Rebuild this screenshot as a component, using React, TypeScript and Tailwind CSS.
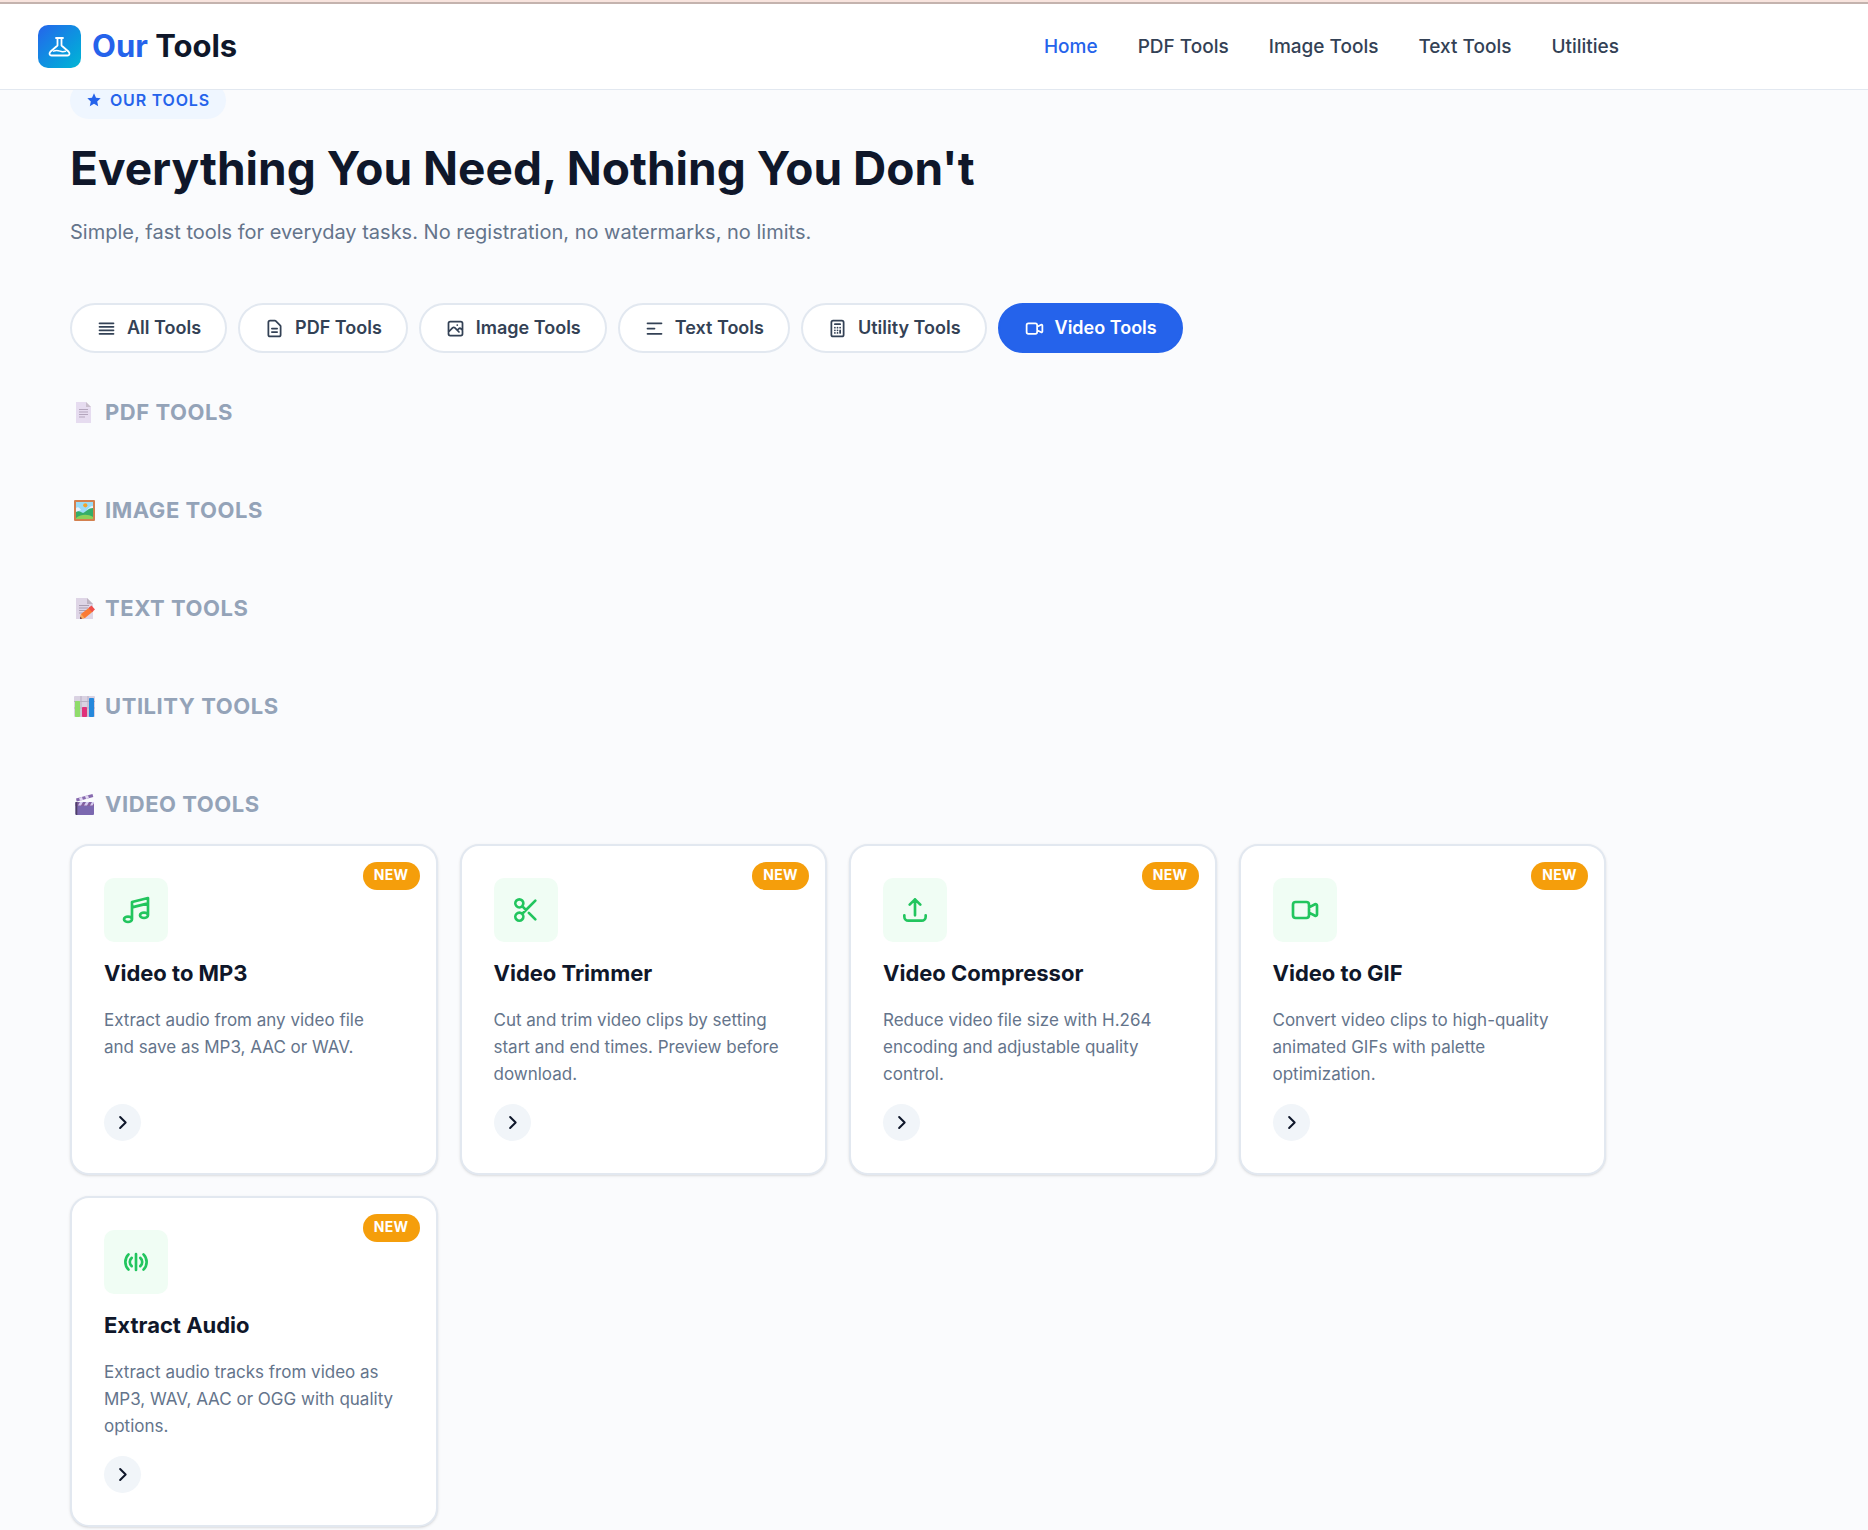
import React from "react";

function Stroke({ d, className }: { d: string; className: string }) {
  return (
    <svg viewBox="0 0 24 24" fill="none" stroke="currentColor" strokeWidth={2} strokeLinecap="round" strokeLinejoin="round" aria-hidden="true" className={className}>
      <path d={d} />
    </svg>
  );
}

const videoPath =
  "M15 10l4.553-2.276A1 1 0 0121 8.618v6.764a1 1 0 01-1.447.894L15 14M5 18h8a2 2 0 002-2V8a2 2 0 00-2-2H5a2 2 0 00-2 2v8a2 2 0 002 2z";

const navLinks = ["Home", "PDF Tools", "Image Tools", "Text Tools", "Utilities"];

const filters = [
  { label: "All Tools", d: "M4 6h16M4 10h16M4 14h16M4 18h16" },
  {
    label: "PDF Tools",
    d: "M9 12h6m-6 4h6m2 5H7a2 2 0 01-2-2V5a2 2 0 012-2h5.586a1 1 0 01.707.293l5.414 5.414a1 1 0 01.293.707V19a2 2 0 01-2 2z",
  },
  {
    label: "Image Tools",
    d: "M4 16l4.586-4.586a2 2 0 012.828 0L16 16m-2-2l1.586-1.586a2 2 0 012.828 0L20 14m-6-6h.01M6 20h12a2 2 0 002-2V6a2 2 0 00-2-2H6a2 2 0 00-2 2v12a2 2 0 002 2z",
  },
  { label: "Text Tools", d: "M4 6h16M4 12h8m-8 6h16" },
  {
    label: "Utility Tools",
    d: "M9 7h6m0 10v-3m-3 3h.01M9 17h.01M9 14h.01M12 14h.01M15 11h.01M12 11h.01M9 11h.01M7 21h10a2 2 0 002-2V5a2 2 0 00-2-2H7a2 2 0 00-2 2v14a2 2 0 002 2z",
  },
  { label: "Video Tools", d: videoPath, active: true },
];

const tools = [
  {
    title: "Video to MP3",
    text: "Extract audio from any video file and save as MP3, AAC or WAV.",
    d: "M9 19V6l12-3v13M9 19c0 1.105-1.343 2-3 2s-3-.895-3-2 1.343-2 3-2 3 .895 3 2zm12-3c0 1.105-1.343 2-3 2s-3-.895-3-2 1.343-2 3-2 3 .895 3 2zM9 10l12-3",
  },
  {
    title: "Video Trimmer",
    text: "Cut and trim video clips by setting start and end times. Preview before download.",
    d: "M14.121 14.121L19 19m-7-7l7-7m-7 7l-2.879 2.879M12 12L9.121 9.121m0 5.758a3 3 0 10-4.243 4.243 3 3 0 004.243-4.243zm0-5.758a3 3 0 10-4.243-4.243 3 3 0 004.243 4.243z",
  },
  {
    title: "Video Compressor",
    text: "Reduce video file size with H.264 encoding and adjustable quality control.",
    d: "M4 16v1a3 3 0 003 3h10a3 3 0 003-3v-1m-4-8l-4-4m0 0L8 8m4-4v12",
  },
  {
    title: "Video to GIF",
    text: "Convert video clips to high-quality animated GIFs with palette optimization.",
    d: videoPath,
  },
  {
    title: "Extract Audio",
    text: "Extract audio tracks from video as MP3, WAV, AAC or OGG with quality options.",
    d: "M12 6v12M6.4 6.3a8 8 0 000 11.4M17.6 6.3a8 8 0 010 11.4M8.8 8.9a4 4 0 000 6.2M15.2 8.9a4 4 0 010 6.2",
  },
];

function PageEmoji() {
  return (
    <svg viewBox="0 0 21 21" className="size-[21px]" aria-hidden="true">
      <path d="M2 0h10l5 5v16H2z" fill="#e6dcf0" />
      <path d="M12 0l5 5h-5z" fill="#c9bfcd" />
      <path d="M5 7.5h9M5 10h9M5 12.5h9M5 15h6" stroke="#b3a5bd" strokeWidth="1" />
    </svg>
  );
}

function PictureEmoji() {
  return (
    <svg viewBox="0 0 21 21" className="size-[21px]" aria-hidden="true">
      <rect width="21" height="21" rx="1" fill="#d3804f" />
      <rect x="2" y="2" width="17" height="17" fill="#9bdcf7" />
      <path d="M2 8c2-2 4 0 5 2l-5 2zM19 6c-3 0-4 2-6 4l6 1z" fill="#e9f2fd" />
      <circle cx="11.3" cy="5.3" r="2.1" fill="#f2a42c" />
      <path d="M2 12c3-2 5 0 7 1 3-1 5-5 10-5v11H2z" fill="#34ad68" />
      <path d="M2 18c5-4 12-4 17-1v2H2z" fill="#8bd15a" />
    </svg>
  );
}

function MemoEmoji() {
  return (
    <svg viewBox="0 0 21 21" className="size-[21px]" aria-hidden="true">
      <path d="M2 0h11l6 6v15H2z" fill="#ded5e6" />
      <path d="M13 0l6 6h-6z" fill="#bdb3c2" />
      <path d="M5 7.5h10M5 10h9M5 12.5h7M5 15h5" stroke="#aa9fb3" strokeWidth="1" />
      <path d="M6 21l1-5 9-7 3.500 4-8.500 7z" fill="#fb7a35" />
      <path d="M6 21l1-5 3.500 4z" fill="#f7ab5d" />
      <path d="M14.500 10l3-2.500 3.500 4-3 2.500z" fill="#ef4f4c" />
      <path d="M6 21l.5-2.200 1.500 1.600z" fill="#4b2a4a" />
    </svg>
  );
}

function ChartEmoji() {
  return (
    <svg viewBox="0 0 21 21" className="size-[21px]" aria-hidden="true">
      <rect width="21" height="21" rx="1" fill="#d9d2e2" />
      <path d="M0 5.500h21M0 12h21M7 0v21M14 0v21" stroke="#b9afc4" strokeWidth="1" />
      <rect x="1" y="5" width="5" height="16" rx=".8" fill="#8fdc6b" />
      <rect x="8" y="11" width="5" height="10" rx=".8" fill="#e0307a" />
      <rect x="15" y="2" width="5" height="19" rx=".8" fill="#2588dc" />
    </svg>
  );
}

function ClapperEmoji() {
  return (
    <svg viewBox="0 0 21 21" className="size-[21px]" aria-hidden="true">
      <path d="M2 4.500L18.500 0l.8 3L2.700 7.500z" fill="#8669ae" />
      <path d="M5 3.700l3-.8 1 3-3 .8zM11 2l3-.8 1 3-3 .8z" fill="#e3d8f3" />
      <rect x="1.500" y="8" width="18.500" height="13" rx="1" fill="#7b68b0" />
      <path d="M1.500 8.500H20V12H1.500z" fill="#85609f" />
      <path d="M6 8h3l-2 3.500H4zM12 8h3l-2 3.500h-3zM18 8h2v1l-1.500 2.500H16z" fill="#d5ccf2" />
      <path d="M1.500 8h1.800v13H2.500a1 1 0 01-1-1z" fill="#4e3f68" />
    </svg>
  );
}

function SectionTitle({ icon, children }: { icon: React.ReactNode; children: string }) {
  return (
    <h2 className="flex items-center gap-[10px] pl-1 text-[22px] leading-8 font-bold tracking-wide text-[#94a3b8]">
      {icon}
      {children}
    </h2>
  );
}

function ToolCard({ tool }: { tool: (typeof tools)[number] }) {
  return (
    <article className="relative flex flex-col rounded-[19px] border-2 border-[#e2e8f0] bg-white p-8 shadow-sm">
      <span className="absolute top-4 right-4 rounded-full bg-[#f59e0b] px-[11px] pt-[3px] pb-[5px] text-sm font-bold tracking-wide text-white">NEW</span>
      <div className="flex size-16 items-center justify-center rounded-[10px] bg-[#f0fdf4] text-[#22c55e]">
        <Stroke d={tool.d} className="size-8" />
      </div>
      <h3 className="mt-4 text-[22px] leading-[30px] font-bold text-[#0f172a]">{tool.title}</h3>
      <p className="mt-[19px] mb-4 pr-2 text-[17px] leading-[27px] text-[#64748b]">{tool.text}</p>
      <a href="#" aria-label={"Open " + tool.title} className="mt-auto flex size-[37px] items-center justify-center rounded-full bg-[#f1f5f9] text-[#0f172a]">
        <Stroke d="M9 5l7 7-7 7" className="size-[19px] stroke-[2.5]" />
      </a>
    </article>
  );
}

export default function App() {
  return (
    <div className="min-h-screen bg-[#fafbfd] font-['Inter',sans-serif] text-[#0f172a]">
      <header className="relative z-10 border-b border-[#e2e8f0] bg-white">
        <div className="h-1 border-b-2 border-[#c4b3ae] bg-[#f8e4de]" />
        <div className="flex h-[85px] max-w-[1657px] items-center justify-between px-[38px]">
          <a href="#" className="flex items-center gap-[11px]">
            <span className="flex size-[43px] items-center justify-center rounded-[10px] bg-linear-135 from-[#2563eb] to-[#06b6d4] text-white">
              <svg viewBox="0 0 24 24" fill="none" stroke="currentColor" strokeWidth={1.8} strokeLinecap="round" strokeLinejoin="round" aria-hidden="true" className="size-6">
                <path d="M8 3h7M9.500 3v7.500L2.300 16.800c-1.500 1.600-.7 3.700 1.200 3.700h16c1.900 0 2.700-2.100 1.200-3.700L13.500 10.500V3" />
                <path d="M5.500 16.200c2.500-1.400 4.500-.9 6.500-.1 2 .8 3.500.7 5.500.2" strokeWidth={1.500} />
              </svg>
            </span>
            <span className="pb-0.5 text-[31px] leading-10 font-bold">
              <span className="text-[#2563eb]">Our</span> Tools
            </span>
          </a>
          <nav className="flex gap-10 pt-0.5 text-[19px] font-medium text-[#334155]">
            {navLinks.map((link, i) => (
              <a key={link} href="#" className={i === 0 ? "text-[#2563eb]" : ""}>
                {link}
              </a>
            ))}
          </nav>
        </div>
      </header>

      <main className="-mt-2 max-w-[1676px] px-[70px]">
        <div className="inline-flex h-[37px] items-center gap-2 rounded-full bg-[#eff6ff] px-4 pb-0.5 align-top font-semibold tracking-wider text-[#2563eb]">
          <svg viewBox="0 0 24 24" fill="currentColor" aria-hidden="true" className="size-4">
            <path d="M12 2l3 6.600 7 .8-5.200 4.800 1.500 7.300L12 17.800l-6.300 3.700 1.500-7.300L2 9.400l7-.8z" />
          </svg>
          OUR TOOLS
        </div>
        <h1 className="mt-[22px] text-[46px] leading-[55px] font-bold">Everything You Need, Nothing You Don't</h1>
        <p className="mt-[19px] text-xl leading-[34px] text-[#64748b]">
          Simple, fast tools for everyday tasks. No registration, no watermarks, no limits.
        </p>

        <div className="mt-[54px] flex flex-wrap gap-[11px]">
          {filters.map((f) => (
            <button
              key={f.label}
              type="button"
              className={
                "flex h-[50px] items-center gap-[10px] rounded-full border-2 px-6 text-lg font-semibold " +
                (f.active ? "border-[#2563eb] bg-[#2563eb] text-white" : "border-[#e2e8f0] bg-white text-[#334155]")
              }
            >
              <Stroke d={f.d} className="size-[21px]" />
              {f.label}
            </button>
          ))}
        </div>

        <div className="mt-[43px] flex flex-col gap-[66px]">
          <SectionTitle icon={<PageEmoji />}>PDF TOOLS</SectionTitle>
          <SectionTitle icon={<PictureEmoji />}>IMAGE TOOLS</SectionTitle>
          <SectionTitle icon={<MemoEmoji />}>TEXT TOOLS</SectionTitle>
          <SectionTitle icon={<ChartEmoji />}>UTILITY TOOLS</SectionTitle>
          <section>
            <SectionTitle icon={<ClapperEmoji />}>VIDEO TOOLS</SectionTitle>
            <div className="mt-6 grid grid-cols-4 gap-x-[22px] gap-y-[21px]">
              {tools.map((tool) => (
                <ToolCard key={tool.title} tool={tool} />
              ))}
            </div>
          </section>
        </div>
      </main>
    </div>
  );
}
